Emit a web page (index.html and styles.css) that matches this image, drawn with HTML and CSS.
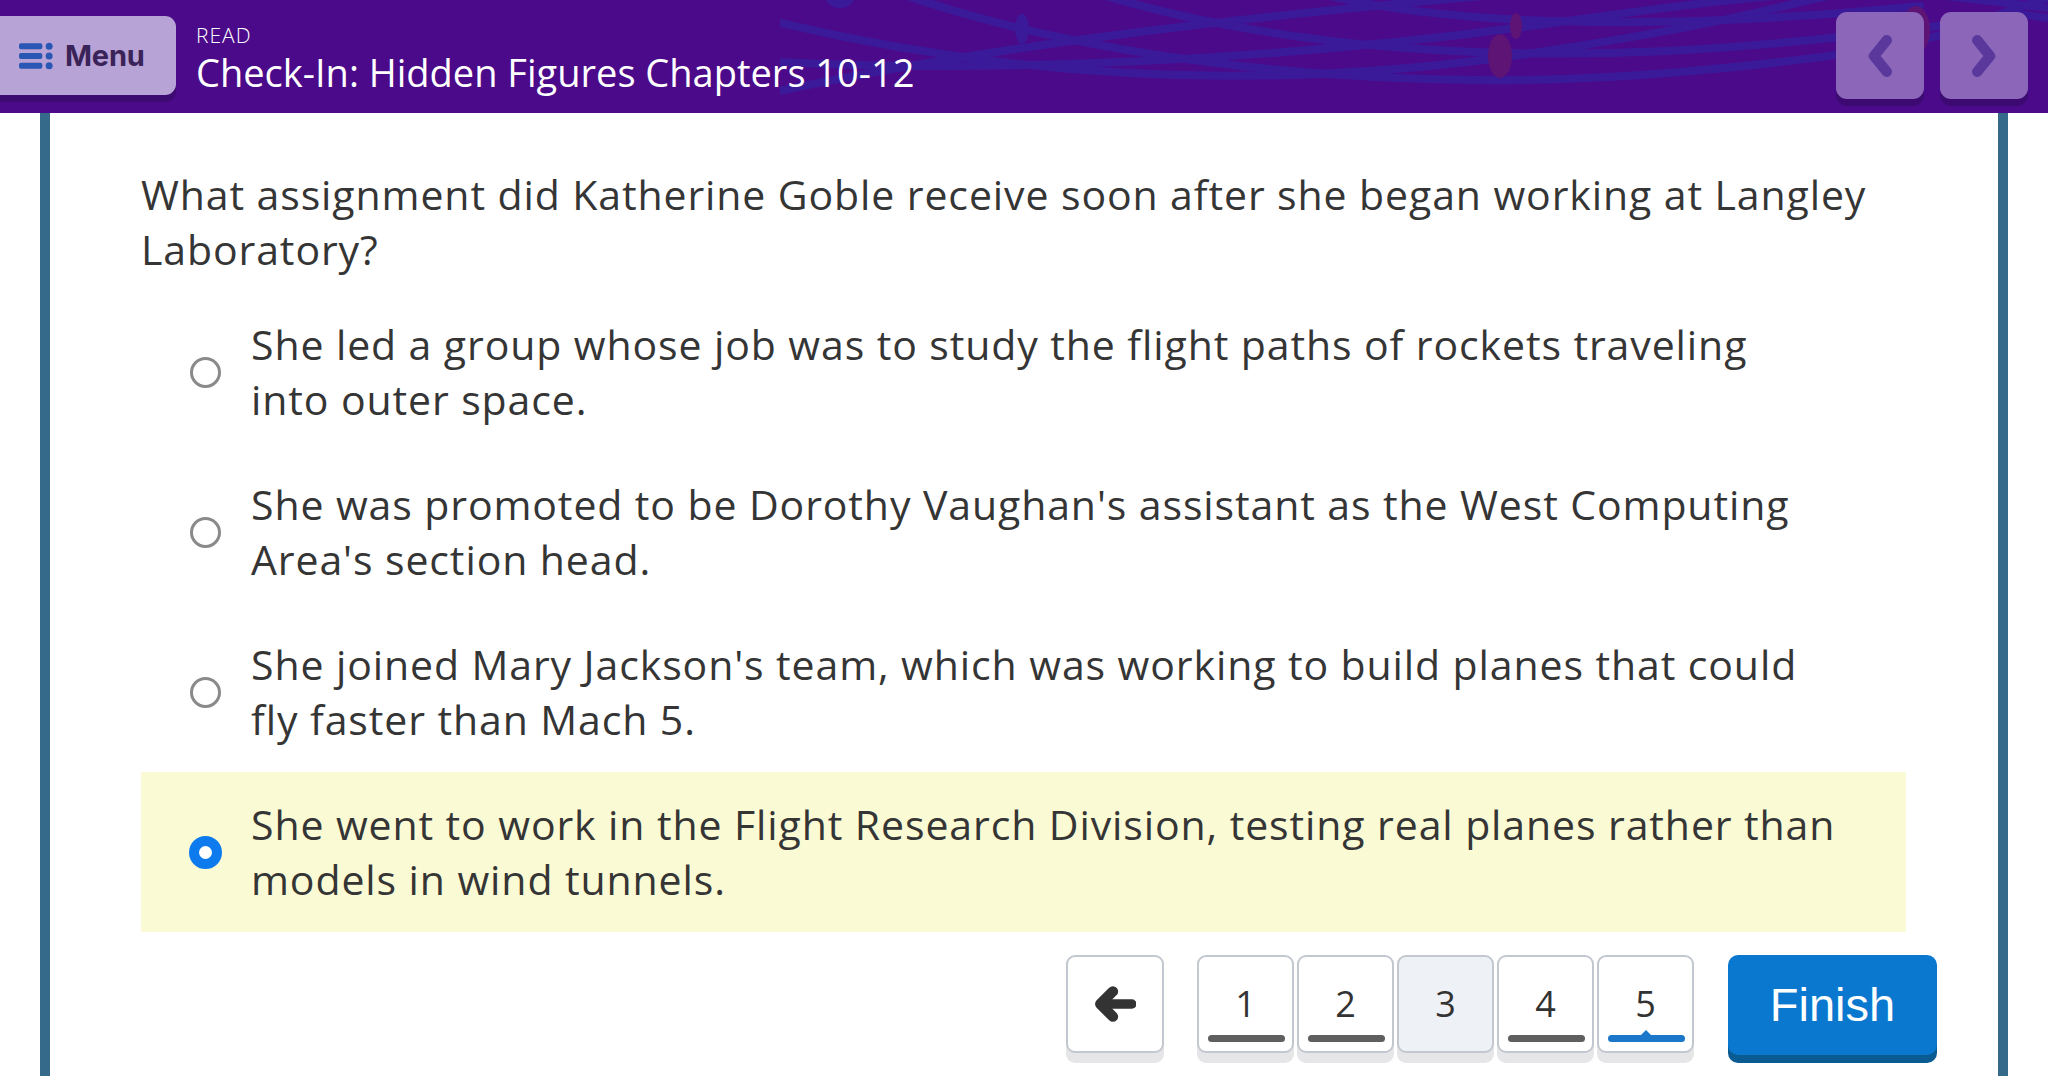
FILE: index.html
```html
<!DOCTYPE html>
<html lang="en">
<head>
<meta charset="utf-8">
<title>Check-In: Hidden Figures Chapters 10-12</title>
<link rel="stylesheet" href="styles.css">
</head>
<body>
<header class="topbar">
  <svg class="deco" viewBox="0 0 1268 113" preserveAspectRatio="none" aria-hidden="true">
    <g fill="none" stroke="#3b1a9a" stroke-width="8" stroke-linecap="round">
      <path d="M0 62 C 200 72, 480 64, 780 22 S 1100 -12, 1268 8"/>
      <path d="M110 -10 C 300 58, 600 98, 900 72 S 1180 22, 1268 -2"/>
      <path d="M-20 18 C 240 82, 500 92, 760 52 S 1000 0, 1100 -12"/>
      <path d="M300 -12 C 460 40, 700 72, 1010 42 S 1200 10, 1268 18"/>
      <path d="M-60 104 C 200 44, 500 12, 800 -12"/>
      <path d="M520 -12 C 640 24, 860 34, 1140 6"/>
    </g>
    <g fill="#3b1a9a">
      <ellipse cx="242" cy="29" rx="7" ry="15"/>
      <ellipse cx="60" cy="-2" rx="14" ry="10"/>
    </g>
    <g fill="#5e1474">
      <ellipse cx="720" cy="56" rx="12" ry="22"/>
      <ellipse cx="736" cy="26" rx="6" ry="13"/>
      <ellipse cx="1136" cy="30" rx="14" ry="24"/>
    </g>
  </svg>
  <button class="menu-btn" type="button">
    <svg class="menu-icon" viewBox="0 0 36 28" aria-hidden="true">
      <g fill="#2a57b4">
        <rect x="0" y="1" width="24" height="6" rx="2"/>
        <rect x="0" y="11" width="24" height="6" rx="2"/>
        <rect x="0" y="21" width="24" height="6" rx="2"/>
        <circle cx="31" cy="4" r="3.6"/>
        <circle cx="31" cy="14" r="3.6"/>
        <circle cx="31" cy="24" r="3.6"/>
      </g>
    </svg>
    <span class="menu-label">Menu</span>
  </button>
  <div class="titles">
    <div class="kicker">READ</div>
    <h1 class="title">Check-In: Hidden Figures Chapters 10-12</h1>
  </div>
  <div class="pager">
    <button class="arrow-btn" type="button" aria-label="Previous">
      <svg viewBox="0 0 40 60" aria-hidden="true"><path d="M29 9 L12 30 L29 51" fill="none" stroke="#5b399c" stroke-width="14" stroke-linecap="round" stroke-linejoin="round"/></svg>
    </button>
    <button class="arrow-btn" type="button" aria-label="Next">
      <svg viewBox="0 0 40 60" aria-hidden="true"><path d="M11 9 L28 30 L11 51" fill="none" stroke="#5b399c" stroke-width="14" stroke-linecap="round" stroke-linejoin="round"/></svg>
    </button>
  </div>
</header>

<main class="card">
  <p class="question">What assignment did Katherine Goble receive soon after she began working at Langley Laboratory?</p>
  <ul class="options">
    <li class="option">
      <span class="radio"></span>
      <span class="opt-text">She led a group whose job was to study the flight paths of rockets traveling<br>into outer space.</span>
    </li>
    <li class="option">
      <span class="radio"></span>
      <span class="opt-text">She was promoted to be Dorothy Vaughan's assistant as the West Computing Area's section head.</span>
    </li>
    <li class="option">
      <span class="radio"></span>
      <span class="opt-text">She joined Mary Jackson's team, which was working to build planes that could fly faster than Mach 5.</span>
    </li>
    <li class="option selected">
      <span class="radio"></span>
      <span class="opt-text">She went to work in the Flight Research Division, testing real planes rather than models in wind tunnels.</span>
    </li>
  </ul>
  <nav class="qnav">
    <button class="nav-btn back" type="button" aria-label="Back">
      <svg viewBox="0 0 40 34" aria-hidden="true">
        <path d="M36 17 H12" fill="none" stroke="#333" stroke-width="9" stroke-linecap="round"/>
        <path d="M18 5 L6 17 L18 29" fill="none" stroke="#333" stroke-width="10" stroke-linecap="round" stroke-linejoin="round"/>
      </svg>
    </button>
    <div class="nums">
      <button class="nav-btn num done" type="button">1</button>
      <button class="nav-btn num done" type="button">2</button>
      <button class="nav-btn num current" type="button">3</button>
      <button class="nav-btn num done" type="button">4</button>
      <button class="nav-btn num active" type="button">5</button>
    </div>
    <button class="finish" type="button">Finish</button>
  </nav>
</main>
</body>
</html>
```

FILE: styles.css
```css
* { box-sizing: border-box; }

html, body {
  margin: 0;
  padding: 0;
  height: 100%;
  overflow: hidden;
  background: #ffffff;
}

body {
  font-family: "Open Sans", "Noto Sans", sans-serif;
  color: #333333;
}

button {
  font-family: inherit;
  border: none;
  cursor: pointer;
}

/* ---------- header ---------- */
.topbar {
  position: relative;
  height: 113px;
  background: #4b0a8a;
  display: flex;
  align-items: flex-start;
  overflow: hidden;
}

.deco {
  position: absolute;
  left: 780px;
  top: 0;
  width: 1268px;
  height: 113px;
  pointer-events: none;
}

.menu-btn {
  position: relative;
  margin-top: 16px;
  width: 176px;
  height: 79px;
  background: #b8a3d6;
  border-radius: 0 11px 11px 0;
  box-shadow: 0 7px 0 #3d0a72;
  display: flex;
  align-items: center;
  padding: 0 0 0 19px;
  gap: 11px;
}

.menu-icon {
  width: 35px;
  height: 28px;
}

.menu-label {
  font-family: "Inter", "Liberation Sans", sans-serif;
  font-weight: 700;
  font-size: 29px;
  color: #3a2358;
  letter-spacing: -0.2px;
}

.titles {
  position: relative;
  margin-left: 20px;
  padding-top: 22px;
  color: #ffffff;
}

.kicker {
  font-size: 21px;
  font-weight: 300;
  line-height: 26px;
  letter-spacing: 1px;
}

.title {
  margin: 0;
  font-size: 38px;
  font-weight: 500;
  line-height: 48px;
  letter-spacing: 0;
}

.pager {
  position: relative;
  margin-left: auto;
  margin-right: 20px;
  margin-top: 12px;
  display: flex;
  gap: 16px;
}

.arrow-btn {
  width: 88px;
  height: 87px;
  border-radius: 11px;
  background: #8c67b9;
  box-shadow: 0 7px 0 #3d0a72;
  display: flex;
  align-items: center;
  justify-content: center;
  padding: 0;
}

.arrow-btn svg {
  width: 30px;
  height: 46px;
}

/* ---------- card ---------- */
.card {
  margin: 0 40px;
  min-height: 1100px;
  border-left: 10px solid #366a8b;
  border-right: 10px solid #366a8b;
  padding: 54px 92px 0 91px;
}

.question {
  margin: 0 0 15px;
  font-size: 41px;
  line-height: 55px;
  letter-spacing: 0.9px;
  color: #353535;
}

.options {
  list-style: none;
  margin: 0;
  padding: 0;
}

.option {
  display: flex;
  align-items: center;
  height: 160px;
  padding: 0 62px 0 49px;
}

.option.selected {
  background: #fafad4;
}

.radio {
  flex: none;
  width: 31px;
  height: 31px;
  border-radius: 50%;
  border: 3px solid #8a8a8a;
  background: #ffffff;
}

.option.selected .radio {
  border: 10px solid #0d7bee;
  width: 33px;
  height: 33px;
  margin-left: -1px;
  margin-right: -1px;
}

.opt-text {
  margin-left: 30px;
  font-size: 41px;
  line-height: 55px;
  letter-spacing: 0.9px;
  color: #353535;
}

/* ---------- question nav ---------- */
.qnav {
  margin-top: 23px;
  margin-right: -31px;
  display: flex;
  justify-content: flex-end;
  align-items: flex-start;
}

.nums {
  display: flex;
  gap: 3px;
  margin-left: 33px;
}

.nav-btn {
  position: relative;
  width: 98px;
  height: 98px;
  background: #ffffff;
  border: 2px solid #c3c8d0;
  border-radius: 9px;
  box-shadow: 0 10px 0 #e6e6e8;
  color: #333333;
  font-size: 36px;
  padding: 0 0 2px;
  display: flex;
  align-items: center;
  justify-content: center;
}

.nav-btn.num {
  width: 97px;
}

.nav-btn.back {
  padding: 0;
}

.nav-btn.back svg {
  width: 42px;
  height: 36px;
}

.nav-btn.current {
  background: #eef1f5;
}

.nav-btn.done::after,
.nav-btn.active::after {
  content: "";
  position: absolute;
  left: 50%;
  bottom: 9px;
  width: 77px;
  height: 7px;
  margin-left: -38px;
  border-radius: 4px;
  background: #5f5f5f;
}

.nav-btn.active::after {
  background: #1a77c9;
}

.nav-btn.active::before {
  content: "";
  position: absolute;
  left: 50%;
  bottom: 14px;
  margin-left: -7px;
  border-left: 7px solid transparent;
  border-right: 7px solid transparent;
  border-bottom: 7px solid #1a77c9;
}

.finish {
  margin-left: 34px;
  width: 209px;
  height: 100px;
  border-radius: 10px;
  background: #0a78cf;
  box-shadow: 0 8px 0 #0a5b92;
  color: #ffffff;
  font-family: "Liberation Sans", "Open Sans", sans-serif;
  font-size: 47px;
  padding: 0 0 2px;
}
```
